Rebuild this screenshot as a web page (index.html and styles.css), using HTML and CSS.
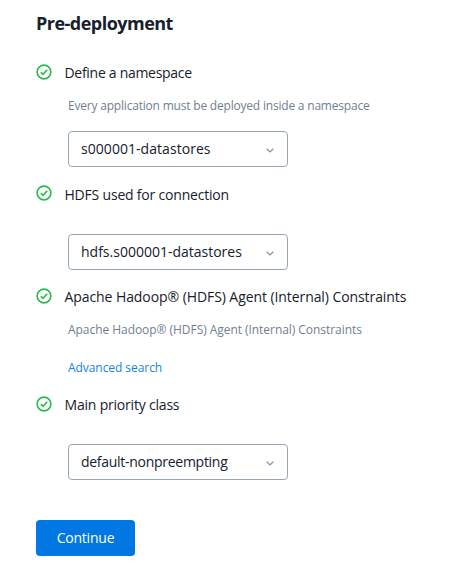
FILE: index.html
```html
<!DOCTYPE html>
<html lang="en">
<head>
<meta charset="utf-8">
<title>Pre-deployment</title>
<link rel="stylesheet" href="styles.css">
</head>
<body>
<svg class="defs" aria-hidden="true">
  <symbol id="check" viewBox="0 0 16 16"><circle cx="8" cy="8" r="6.9"/><path d="M4.8 8.2 7.1 10.3 11.2 5.8"/></symbol>
  <symbol id="chevron" viewBox="0 0 8 5"><path d="M.7.8 4 3.9 7.3.8"/></symbol>
</svg>
<main class="form">
  <h1 class="heading"><span class="t-heading">Pre-deployment</span></h1>
  <section class="step step-namespace">
    <h2 class="title"><svg class="check"><use href="#check"/></svg><span class="t-define">Define a namespace</span></h2>
    <p class="description t-every">Every application must be deployed inside a namespace</p>
    <button class="select"><span class="t-store">s000001-datastores</span><svg class="chevron"><use href="#chevron"/></svg></button>
  </section>
  <section class="step step-hdfs">
    <h2 class="title"><svg class="check raised"><use href="#check"/></svg><span class="t-used">HDFS used for connection</span></h2>
    <button class="select"><span class="t-hdfs">hdfs.s000001-datastores</span><svg class="chevron"><use href="#chevron"/></svg></button>
  </section>
  <section class="step step-constraints">
    <h2 class="title"><svg class="check"><use href="#check"/></svg><span class="t-apache">Apache Hadoop® (HDFS) Agent (Internal) Constraints</span></h2>
    <p class="description t-agent">Apache Hadoop® (HDFS) Agent (Internal) Constraints</p>
    <a class="link t-search" href="#">Advanced search</a>
  </section>
  <section class="step step-priority">
    <h2 class="title"><svg class="check"><use href="#check"/></svg><span class="t-main">Main priority class</span></h2>
    <button class="select"><span class="t-default">default-nonpreempting</span><svg class="chevron"><use href="#chevron"/></svg></button>
  </section>
  <button class="continue"><span class="t-continue">Continue</span></button>
</main>
</body>
</html>
```
FILE: styles.css
```css
* { box-sizing: border-box; }
body { margin: 0; background: #fff; color: #16212b; font: 14px/20px "Open Sans", sans-serif; }
.defs { display: none; }
.form { padding: 13px 0 28px 36px; white-space: nowrap; }
.heading, .title, .description { margin: 0; }
.heading { font-size: 18px; line-height: 20px; font-weight: 700; margin-bottom: 30px; }
.title { display: flex; align-items: center; gap: 12.5px; height: 20px; font-size: 14px; font-weight: 400; }
.check { width: 16px; height: 16px; margin-bottom: 2px; fill: none; stroke: #2cbb50; stroke-width: 1.6; }
.raised { margin-bottom: 4px; }
.description { margin: 13px 0 0 32px; font-size: 12px; color: #71808f; }
.select { display: flex; align-items: center; justify-content: space-between; width: 220px; height: 36px; margin: 29px 0 0 32px; padding: 0 13px 0 12px; border: 1px solid #98a7b6; border-radius: 4px; background: #fff; color: #16212b; font: inherit; }
.description + .select { margin-top: 15px; }
.chevron { width: 8px; height: 5px; margin-top: 3px; fill: none; stroke: #8494a5; stroke-width: 1.3; }
.step-namespace { margin-bottom: 18px; }
.step-hdfs { margin-bottom: 17px; }
.step-constraints { margin-bottom: 17px; }
.link { display: block; width: max-content; margin: 18px 0 0 32px; color: #1683e0; font-size: 12px; text-decoration: none; }
.continue { display: block; width: 99px; height: 36px; margin-top: 40px; padding: 0; border: 0; border-radius: 4px; background: #0077e2; color: #fff; font: inherit; }

.t-heading { letter-spacing: -.52px; }
.t-define { letter-spacing: -.29px; }
.t-every { letter-spacing: -.2px; }
.t-store { letter-spacing: .05px; }
.t-used { letter-spacing: -.2px; }
.t-apache { letter-spacing: -.08px; }
.t-agent { letter-spacing: -.05px; }
.t-search { letter-spacing: -.06px; }
.t-main { letter-spacing: -.2px; }
.t-default { letter-spacing: -.28px; }
.t-continue { letter-spacing: -.22px; }
```
